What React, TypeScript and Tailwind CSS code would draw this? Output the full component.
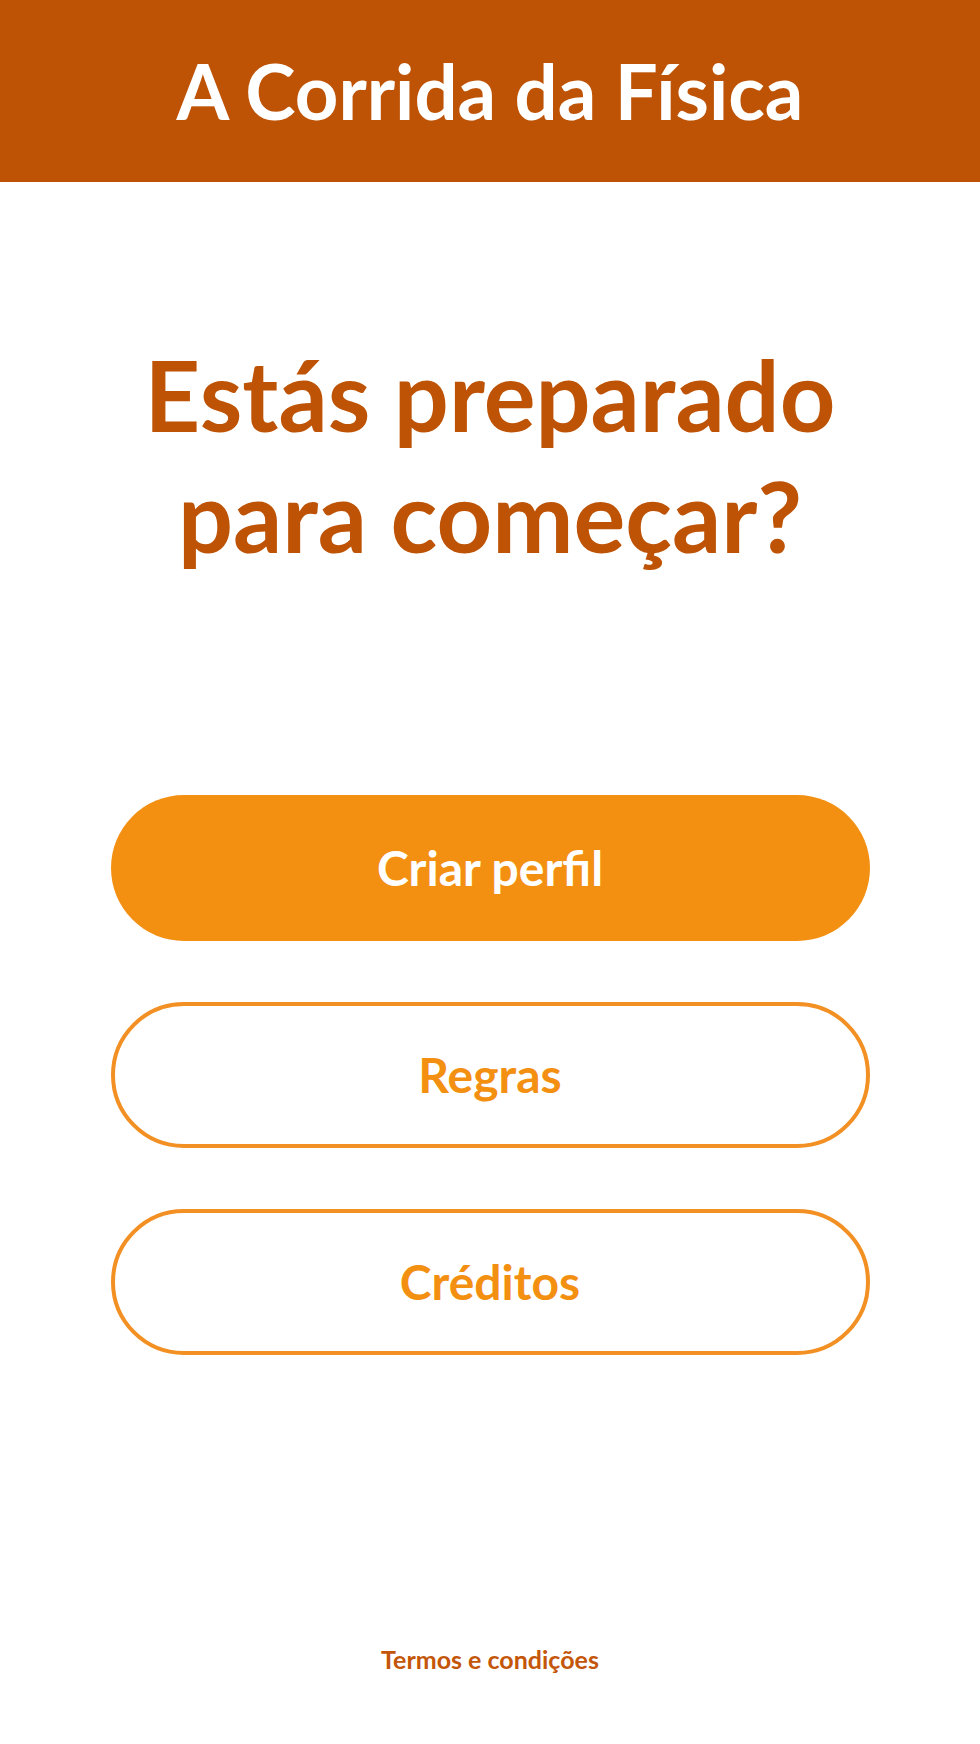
export default function App() {
  const font = { fontFamily: 'Lato, "Noto Sans", sans-serif' };
  return (
    <div className="min-h-[1744px] bg-white flex flex-col" style={font}>
      <header className="h-[182px] bg-[#BE5305] flex items-center justify-center">
        <h1 className="text-[76px] leading-none font-bold text-white">A Corrida da Física</h1>
      </header>
      <main className="flex-1 flex flex-col items-center">
        <h2 className="mt-[152px] text-[97px] leading-[121px] font-bold text-[#BE5305] text-center">
          Estás preparado
          <br />
          para começar?
        </h2>
        <div className="mt-[219px] w-[759px] flex flex-col gap-[61px]">
          <button className="h-[146px] rounded-full bg-[#F39012] text-white text-[48px] font-bold">Criar perfil</button>
          <button className="h-[146px] rounded-full border-[4px] border-[#F29024] bg-white text-[#F39012] text-[48px] font-bold">Regras</button>
          <button className="h-[146px] rounded-full border-[4px] border-[#F29024] bg-white text-[#F39012] text-[48px] font-bold">Créditos</button>
        </div>
        <div className="mt-auto mb-[66px] text-[25px] font-bold text-[#C4560A]">Termos e condições</div>
      </main>
    </div>
  );
}
